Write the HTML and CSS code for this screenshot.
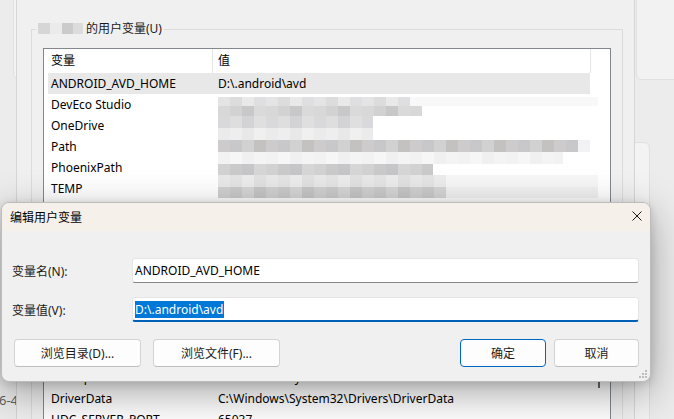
FILE: index.html
```html
<!DOCTYPE html>
<html lang="zh-CN">
<head>
    <meta charset="UTF-8">
    <meta name="viewport" content="width=device-width, initial-scale=1.0">
    <title>编辑用户变量</title>
    <link rel="stylesheet" href="styles.css">
</head>
<body>
    <!-- Settings window behind -->
    <div class="card card-tl"></div>
    <div class="card card-tr"></div>
    <div class="card card-r"></div>
    <span class="behind-text">6-4</span>

    <!-- Environment variables window -->
    <div class="env-window">
        <fieldset class="group">
            <legend><span class="legend-blur"></span>的用户变量(U)</legend>
            <div class="list">
                <div class="list-head">
                    <div class="head-name">变量</div>
                    <div class="head-value">值</div>
                </div>
                <div class="row selected"><span>ANDROID_AVD_HOME</span><span>D:\.android\avd</span></div>
                <div class="row"><span>DevEco Studio</span><span></span></div>
                <div class="row"><span>OneDrive</span><span></span></div>
                <div class="row"><span>Path</span><span></span></div>
                <div class="row"><span>PhoenixPath</span><span></span></div>
                <div class="row"><span>TEMP</span><span></span></div>
                <div class="row"><span>TMP</span><span></span></div>
                <div class="row"><span>ALLUSERSPROFILE</span><span>C:\ProgramData</span></div>
                <div class="row"><span>APPDATA</span><span></span></div>
                <div class="row"><span>CommonProgramFiles</span><span>C:\Program Files\Common Files</span></div>
                <div class="row"><span>CommonProgramW6432</span><span>C:\Program Files\Common Files</span></div>
                <div class="row"><span>COMPUTERNAME</span><span></span></div>
                <div class="row"><span>configsetroot</span><span>C:\Windows\ConfigSetRoot</span></div>
                <div class="row"><span>DEVECO_SDK_HOME</span><span></span></div>
                <div class="row"><span>ComSpec</span><span>C:\Windows\system32\cmd.exe</span></div>
                <div class="row"><span>DriverData</span><span>C:\Windows\System32\Drivers\DriverData</span></div>
                <div class="row"><span>HDC_SERVER_PORT</span><span>65037</span></div>

                <!-- pixelated values -->
                <div class="redact">
                    <i class="r1"></i><i class="r2"></i><i class="r3"></i>
                    <i class="r4"></i><i class="r5"></i><i class="r6"></i>
                    <i class="r7"></i><i class="r8"></i><i class="r9"></i>
                </div>
                <div class="thumb"></div>
            </div>
        </fieldset>
    </div>

    <!-- Edit dialog -->
    <div class="dialog">
        <div class="title-bar">
            <span>编辑用户变量</span>
            <svg class="close" width="10" height="10" viewBox="0 0 10 10">
                <path d="M0.5 0.5 L9.5 9.5 M9.5 0.5 L0.5 9.5" stroke="#1a1a1a" stroke-width="1"/>
            </svg>
        </div>
        <div class="dialog-body">
            <div class="field">
                <label>变量名(N):</label>
                <div class="text-box">ANDROID_AVD_HOME</div>
            </div>
            <div class="field">
                <label>变量值(V):</label>
                <div class="text-box focused"><span class="sel">D:\.android\avd</span></div>
            </div>
            <div class="buttons">
                <button class="btn wide">浏览目录(D)...</button>
                <button class="btn wide">浏览文件(F)...</button>
                <button class="btn default">确定</button>
                <button class="btn cancel">取消</button>
            </div>
        </div>
        <svg class="grip" width="9" height="9" viewBox="0 0 9 9">
            <rect x="6" y="0" width="2" height="2" fill="#bdbdbd"/>
            <rect x="3" y="3" width="2" height="2" fill="#bdbdbd"/>
            <rect x="6" y="3" width="2" height="2" fill="#bdbdbd"/>
            <rect x="0" y="6" width="2" height="2" fill="#bdbdbd"/>
            <rect x="3" y="6" width="2" height="2" fill="#bdbdbd"/>
            <rect x="6" y="6" width="2" height="2" fill="#bdbdbd"/>
        </svg>
    </div>
</body>
</html>
```

FILE: styles.css
```css
* {
    box-sizing: border-box;
}

body {
    margin: 0;
    width: 674px;
    height: 419px;
    overflow: hidden;
    position: relative;
    background-color: #ececec;
    font-family: "Noto Sans", "Noto Sans CJK SC", sans-serif;
    font-size: 12px;
    color: #1a1a1a;
}

/* settings app behind */
.card {
    position: absolute;
    background-color: #f2f2f2;
    border: 1px solid #e0e0e0;
    border-radius: 6px;
}

.card-tl {
    left: 13px;
    top: -10px;
    width: 40px;
    height: 90px;
}

.card-tr {
    left: 636px;
    top: -10px;
    width: 60px;
    height: 90px;
}

.card-r {
    left: 600px;
    top: 142px;
    width: 50px;
    height: 300px;
    background-color: #f3f3f3;
}

.behind-text {
    position: absolute;
    left: -1px;
    top: 391px;
    font-size: 13px;
    color: #606060;
}

/* environment variables window */
.env-window {
    position: absolute;
    left: 16px;
    top: 0;
    width: 619px;
    height: 440px;
    background-color: #f0f0f0;
    border-left: 1px solid #d6d6d6;
    border-right: 1px solid #d6d6d6;
    padding: 21px 11px 0 14px;
}

.group {
    margin: 0;
    min-width: 0;
    height: 430px;
    padding: 11px 11px 0;
    border: 1px solid #dcdcdc;
}

.group legend {
    padding: 0 2px;
    margin-left: -7px;
    line-height: 16px;
    color: #1a1a1a;
}

.legend-blur {
    display: inline-block;
    width: 45px;
    height: 11px;
    margin-right: 3px;
    vertical-align: -1px;
    background: linear-gradient(90deg, #d6d6d6 0 12px, #ebebeb 12px 24px, #cbcbcb 24px 35px, #dcdcdc 35px);
}

.list {
    position: relative;
    height: 410px;
    background-color: #ffffff;
    border: 1px solid #828790;
    color: #000;
}

.list-head {
    display: flex;
    height: 24px;
}

.list-head div {
    line-height: 24px;
    border-right: 1px solid #e5e5e5;
}

.head-name {
    width: 169px;
    padding-left: 7px;
}

.head-value {
    width: 378px;
    padding-left: 5px;
}

.row {
    display: grid;
    grid-template-columns: 164px 378px;
    width: 542px;
    height: 21px;
    margin-left: 4px;
    line-height: 21px;
    white-space: nowrap;
}

.row span:first-child {
    padding-left: 3px;
}

.row span + span {
    padding-left: 6px;
}

.row.selected {
    background-color: #e8e8e8;
}

.redact {
    position: absolute;
    left: 174px;
    top: 48px;
}

.redact i {
    display: block;
    background-repeat: no-repeat;
}

.r1 {
    width: 380px;
    height: 9px;
    background: repeating-linear-gradient(90deg, #e4e4e4 0 12px, #dcdcdc 12px 24px, #e9e9e9 24px 36px, #dfdfe1 36px 48px) 0 0 / 192px 100% no-repeat, #f8f8f9;
}

.r2 {
    width: 204px;
    height: 10px;
    background: repeating-linear-gradient(90deg, #d8d8d8 0 12px, #d2d2d2 12px 24px, #c8c8c8 24px 36px, #dadada 36px 48px);
}

.r3 {
    width: 155px;
    height: 12px;
    background: repeating-linear-gradient(90deg, #d9d9dc 0 12px, #dedede 12px 24px, #d3d3d6 24px 36px, #e0dfdf 36px 48px);
}

.r4 {
    width: 155px;
    height: 12px;
    background: repeating-linear-gradient(90deg, #ebebeb 0 12px, #eeeeee 12px 24px, #e8e8e8 24px 36px, #f0f0f0 36px 48px);
}

.r5 {
    width: 372px;
    height: 12px;
    background: repeating-linear-gradient(90deg, #cdcbcb 0 12px, #c8c8ca 12px 24px, #d1d1d1 24px 36px, #c3c2c0 36px 48px) 0 0 / 360px 100% no-repeat, #f2f2f4;
}

.r6 {
    width: 345px;
    height: 12px;
    background: repeating-linear-gradient(90deg, #f2f2f2 0 12px, #f6f6f6 12px 24px, #f0f0f0 24px 36px, #f4f4f4 36px 48px);
}

.r7 {
    width: 215px;
    height: 11px;
    background: repeating-linear-gradient(90deg, #d2d2d2 0 12px, #cacaca 12px 24px, #c6c6c8 24px 36px, #d6d6d6 36px 48px);
}

.r8 {
    width: 380px;
    height: 12px;
    background: repeating-linear-gradient(90deg, #e8e8e8 0 12px, #e4e4e4 12px 24px, #ececec 24px 36px, #e1e1e1 36px 48px) 0 0 / 228px 100% no-repeat, #f7f7f7;
}

.r9 {
    width: 380px;
    height: 11px;
    background: repeating-linear-gradient(90deg, #d0d0d0 0 12px, #cacaca 12px 24px, #d5d5d5 24px 36px, #c6c6c6 36px 48px) 0 0 / 228px 100% no-repeat, #f1f1f1;
}

.thumb {
    position: absolute;
    left: 554px;
    top: 200px;
    width: 2px;
    height: 139px;
    background-color: #6a6a6a;
}

/* edit dialog */
.dialog {
    position: absolute;
    left: 1px;
    top: 202px;
    width: 650px;
    height: 180px;
    background-color: #f0f0f0;
    border: 1px solid #bcbcbc;
    border-radius: 8px;
    overflow: hidden;
    box-shadow: 0 12px 40px rgba(0, 0, 0, 0.34), 0 2px 10px rgba(0, 0, 0, 0.14);
}

.title-bar {
    display: flex;
    align-items: center;
    justify-content: space-between;
    height: 28px;
    padding: 0 8px;
    background-color: #f6f0ea;
    color: #000;
}

.close {
    display: block;
    margin-top: -2px;
}

.dialog-body {
    padding: 27px 11px 0 10px;
}

.field {
    display: grid;
    grid-template-columns: 120px 1fr;
    align-items: center;
}

.field + .field {
    margin-top: 14px;
}

.field label {
    color: #1a1a1a;
}

.text-box {
    height: 25px;
    padding-left: 2px;
    background-color: #ffffff;
    border: 1px solid #e5e5e5;
    border-bottom-color: #868686;
    border-radius: 3px;
    line-height: 23px;
    color: #000;
    white-space: nowrap;
}

.text-box.focused {
    border-bottom: 2px solid #005fb8;
    line-height: 22px;
}

.sel {
    display: inline-block;
    line-height: 17px;
    padding-right: 1px;
    vertical-align: middle;
    background-color: #0078d7;
    color: #ffffff;
}

.buttons {
    display: flex;
    margin-top: 17px;
    padding-left: 2px;
}

.btn {
    height: 28px;
    padding: 0;
    font: inherit;
    color: #1a1a1a;
    background-color: #fdfdfd;
    border: 1px solid #d3d3d3;
    border-bottom-color: #bdbdbd;
    border-radius: 4px;
}

.wide {
    width: 127px;
}

.wide + .wide {
    margin-left: 12px;
}

.default {
    width: 86px;
    margin-left: auto;
    border-color: #0067c0;
}

.cancel {
    width: 85px;
    margin-left: 8px;
}

.grip {
    position: absolute;
    right: 2px;
    bottom: 2px;
}
```
